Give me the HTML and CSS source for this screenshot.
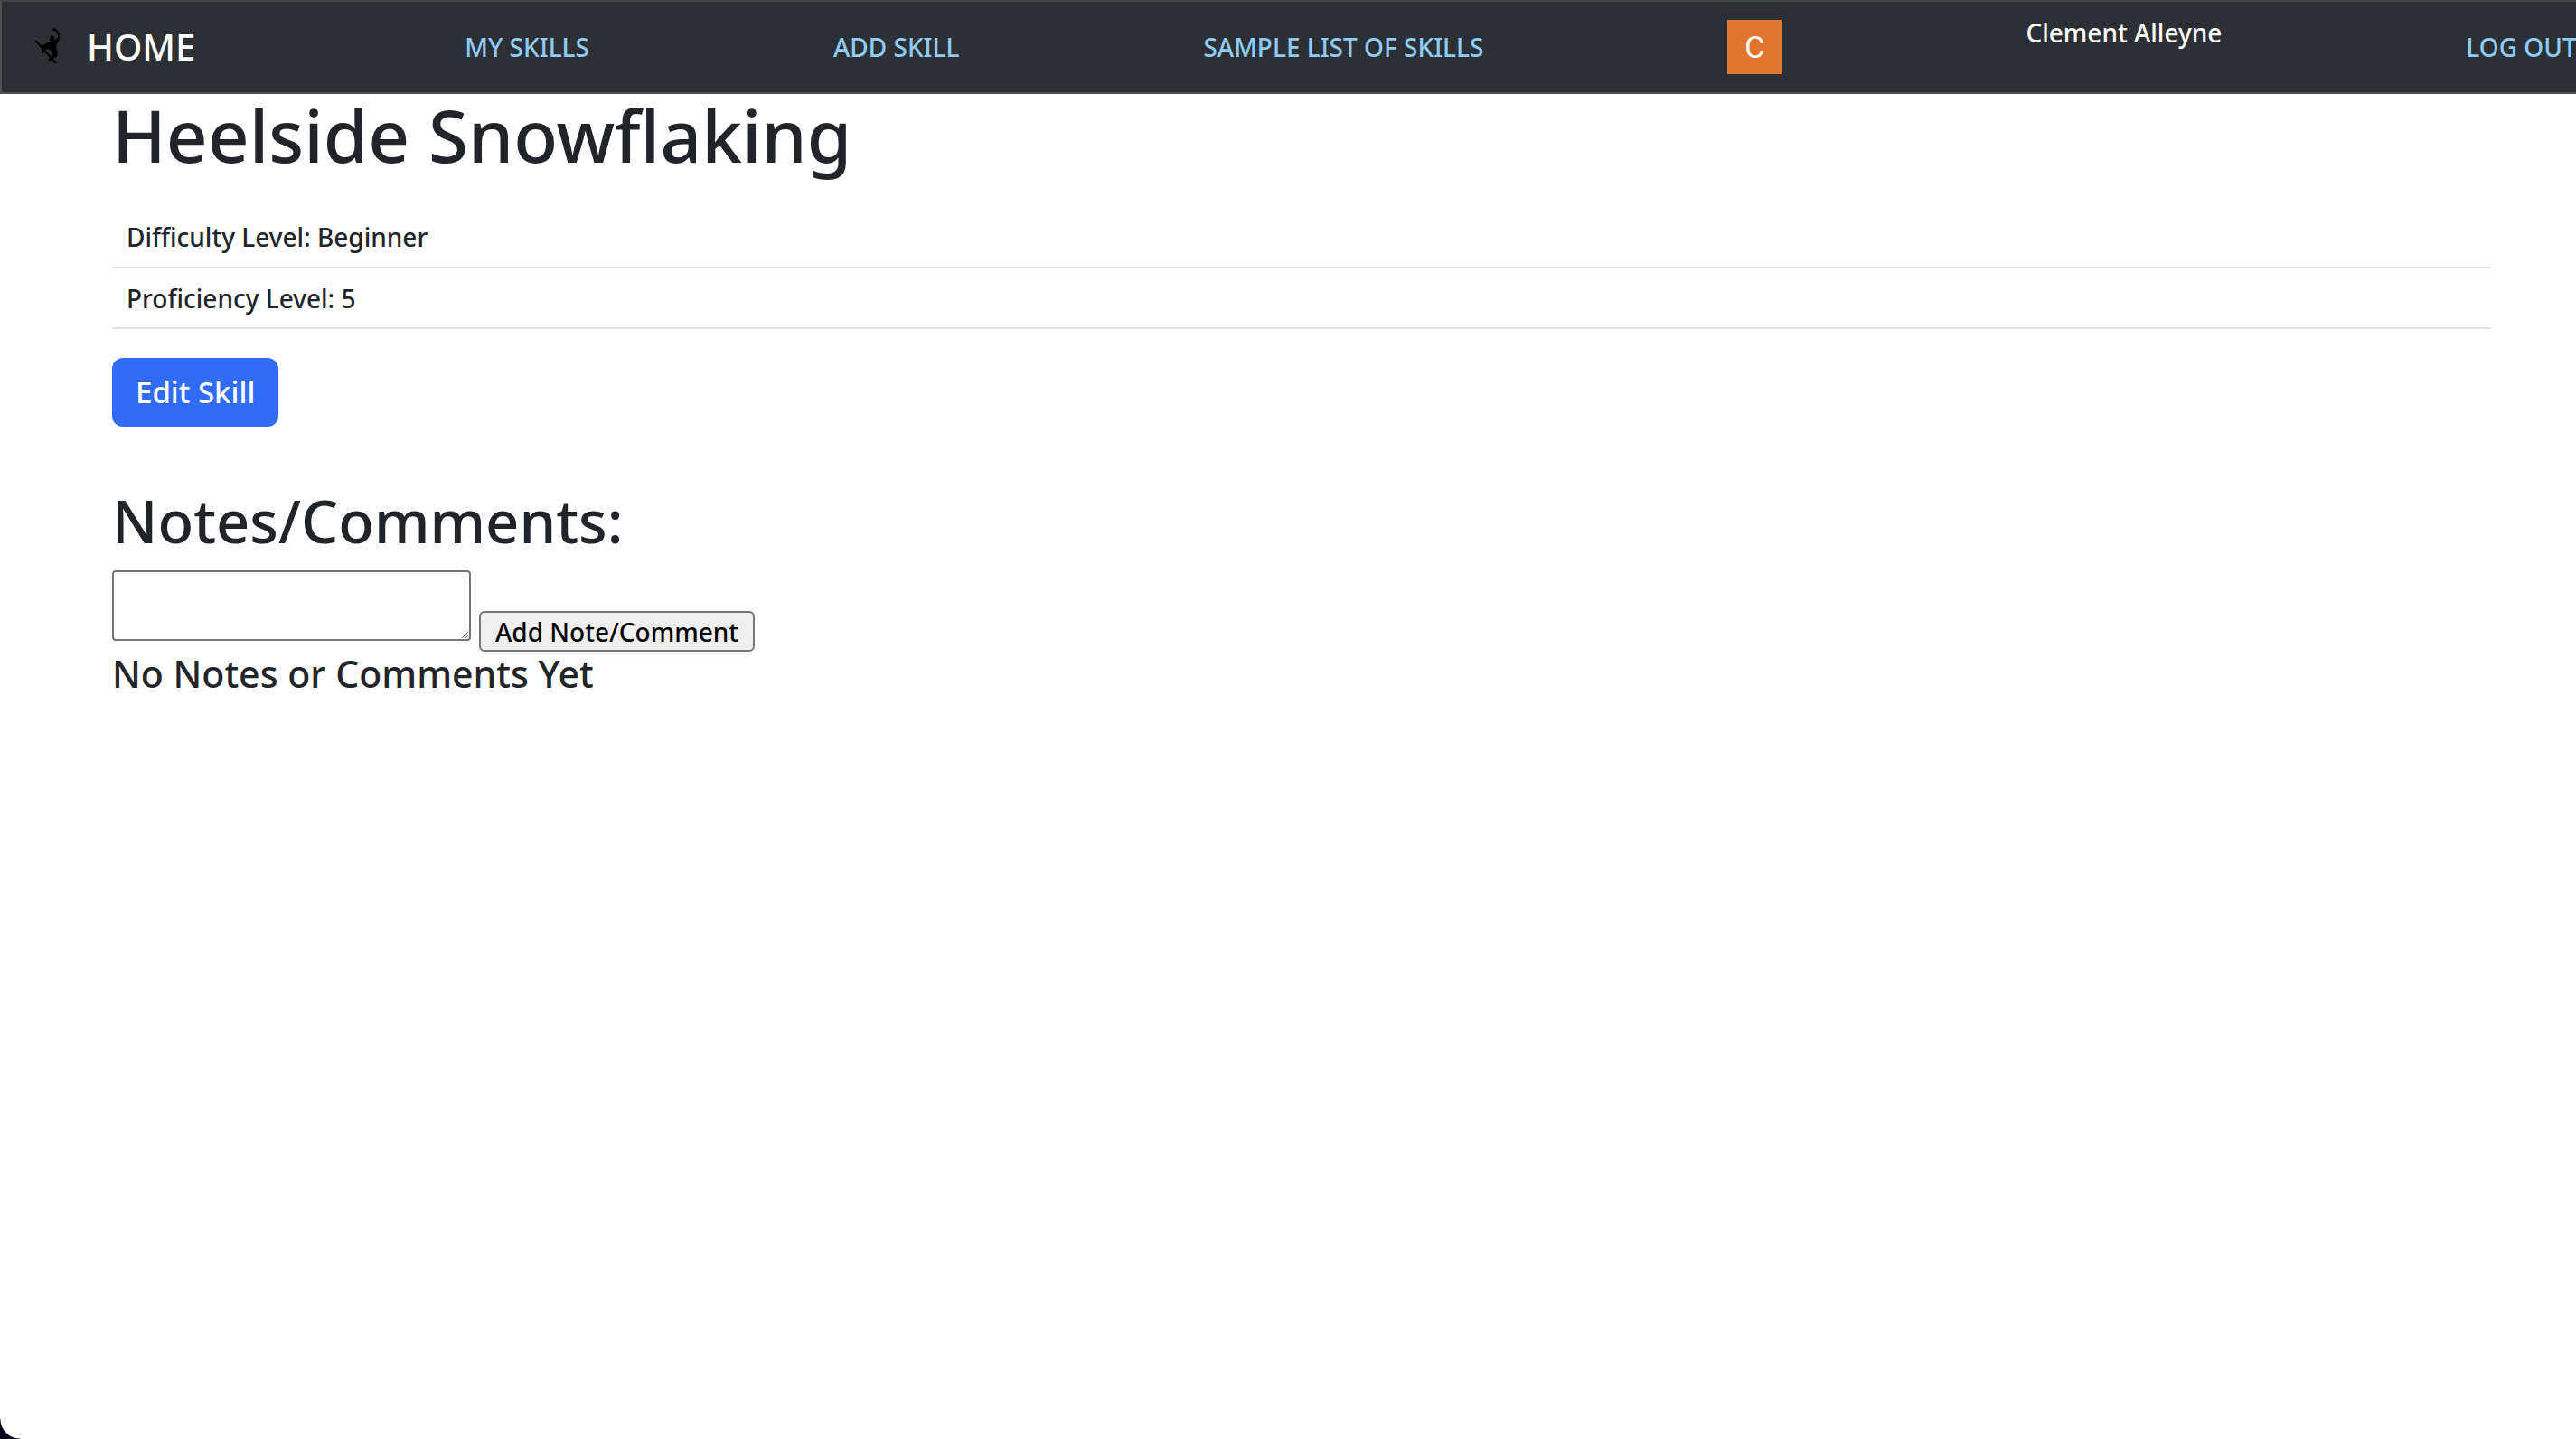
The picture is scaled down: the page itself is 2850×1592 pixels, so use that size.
FILE: index.html
```html
<!DOCTYPE html>
<html lang="en">
<head>
<meta charset="utf-8">
<title>Heelside Snowflaking</title>
<link rel="stylesheet" href="styles.css">
</head>
<body>
<nav class="navbar">
  <a class="brand" href="#">
    <svg class="logo" viewBox="0 0 36 48" aria-hidden="true">
      <path class="board" d="M4 17.500L25.500 41.500"/>
      <path d="M10 23l7-4 3-1-1-2 1-4 2-1 2 2 0 3 4-2 0-4-3-4-3 0 0-2 2-1 3 2 3 4 0 6-3 6-1 4 2 4-1 5-5 4-3 2-2-2 5-5 0-4-4-3-4 1-2 4-2 0z"/>
    </svg>
    <span>HOME</span>
  </a>
  <a class="nav-link" href="#">MY SKILLS</a>
  <a class="nav-link" href="#">ADD SKILL</a>
  <a class="nav-link" href="#">SAMPLE LIST OF SKILLS</a>
  <span class="avatar">C</span>
  <span class="user-name">Clement Alleyne</span>
  <a class="nav-link" href="#">LOG OUT</a>
</nav>
<main class="content">
  <h1>Heelside Snowflaking</h1>
  <table class="details">
    <tbody>
      <tr><td>Difficulty Level: Beginner</td></tr>
      <tr><td>Proficiency Level: 5</td></tr>
    </tbody>
  </table>
  <button class="btn-edit" type="button">Edit Skill</button>
  <h2><label for="note">Notes/Comments:</label></h2>
  <form class="note-form">
    <textarea id="note" class="note-input"></textarea>
    <button class="btn-note" type="button">Add Note/Comment</button>
  </form>
  <p class="empty">No Notes or Comments Yet</p>
</main>
<div class="window-corner"></div>
</body>
</html>
```
FILE: styles.css
```css
* { box-sizing: border-box; }
body {
  margin: 0;
  min-height: 100vh;
  background: #fff;
  color: #212529;
  font-family: "Noto Sans", "Open Sans", sans-serif;
  font-size: 28px;
  font-weight: 500;
  overflow-x: hidden;
}
.navbar {
  display: flex;
  align-items: center;
  gap: 270px;
  height: 104px;
  padding-left: 34px;
  background: #2c3034;
  border: 2px solid #4d5154;
  border-top-color: #444;
  border-right: 0;
  white-space: nowrap;
  overflow: hidden;
}
.navbar > * { flex: none; }
.brand {
  display: flex;
  align-items: center;
  gap: 24px;
  padding-right: 28px;
  color: #fff;
  font-size: 40px;
  line-height: 48px;
  text-decoration: none;
}
.logo { width: 36px; height: 48px; fill: #000; }
.board { stroke: #000; stroke-width: 2; stroke-linecap: round; }
.nav-link { color: #90cbf9; font-size: 28px; text-decoration: none; }
.avatar {
  width: 60px;
  height: 60px;
  background: #e0752d;
  color: #fff;
  font-family: Roboto, sans-serif;
  font-size: 34px;
  font-weight: 400;
  line-height: 60px;
  text-align: center;
}
.user-name { align-self: flex-start; padding-top: 14px; color: #fff; line-height: 40px; }
.content { padding: 0 94px 0 124px; }
h1, h2, p { margin: 0; font-weight: 500; }
h1 { font-size: 80px; line-height: 90px; margin-bottom: 35px; }
.details { width: 100%; border-collapse: collapse; margin-bottom: 32px; }
.details td { height: 67px; padding: 0 16px; border-bottom: 2px solid #dee2e6; }
.btn-edit {
  display: block;
  padding: 14px 26px;
  border: 0;
  border-radius: 12px;
  background: #316cf4;
  color: #fff;
  font: 500 33px/48px "Noto Sans", sans-serif;
}
h2 { margin-top: 68px; font-size: 65px; line-height: 72px; margin-bottom: 19px; }
.note-form { display: flex; align-items: flex-start; gap: 9px; }
.note-input {
  width: 397px;
  height: 78px;
  padding: 4px;
  border: 2px solid #767676;
  border-radius: 4px;
  background: #fff;
  font: inherit;
}
.btn-note {
  margin-top: 45px;
  height: 45px;
  padding: 0 16px;
  border: 2px solid #767676;
  border-radius: 6px;
  background: #efefef;
  color: #000;
  font: 500 28px/40px "Noto Sans", sans-serif;
}
.empty { font-size: 41px; line-height: 48px; }
.window-corner {
  position: fixed;
  left: 0;
  bottom: 0;
  width: 22px;
  height: 22px;
  background: radial-gradient(circle at 100% 0, transparent 21px, #05051a 22px);
}
```
